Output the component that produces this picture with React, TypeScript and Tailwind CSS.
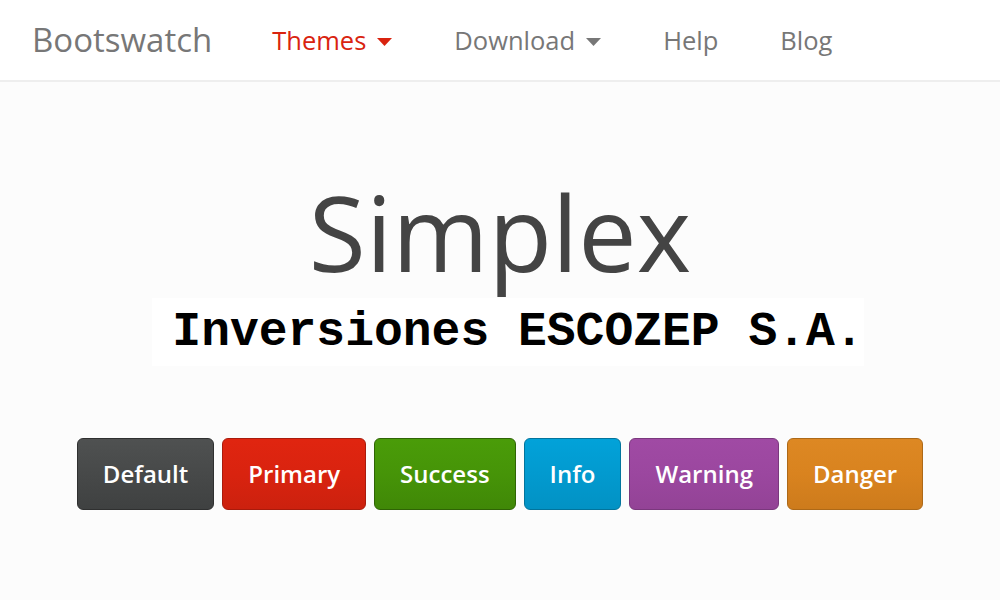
import React from 'react';

const Caret = ({ className }: { className: string }) => (
  <svg width="15" height="8" viewBox="0 0 15 8" className={className}>
    <path d="M0 0 H15 L7.5 8 Z" fill="currentColor" />
  </svg>
);

interface ButtonStyle {
  label: string;
  className: string;
}

const buttons: ButtonStyle[] = [
  { label: 'Default', className: 'from-[#4f5151] via-[#474949] to-[#3f4141] border-[#2f3030]' },
  { label: 'Primary', className: 'from-[#e02510] via-[#d9230f] to-[#cc210e] border-[#a91b0c]' },
  { label: 'Success', className: 'from-[#4a9c09] via-[#469408] to-[#408807] border-[#2f6405]' },
  { label: 'Info', className: 'from-[#02a2d9] via-[#029acf] to-[#0292c4] border-[#02749c]' },
  { label: 'Warning', className: 'from-[#a04aa4] via-[#9b479f] to-[#934396] border-[#7a387d]' },
  { label: 'Danger', className: 'from-[#dd8823] via-[#d9831f] to-[#cd7b1c] border-[#ad6918]' },
];

const App: React.FC = () => {
  return (
    <div className="min-h-screen bg-[#fcfcfc]" style={{ fontFamily: '"Open Sans", sans-serif' }}>
      {/* Navbar */}
      <nav className="h-[82px] bg-white border-b-2 border-[#eeeeee] flex items-center">
        <a className="ml-[32px] pr-[29px] text-[33px] text-[#777777] leading-none -mt-[1px]">Bootswatch</a>
        <ul className="flex items-center text-[25.5px] text-[#777777] leading-none mt-[1px]">
          <li className="px-[31px] flex items-center text-[#d9230f]">
            Themes
            <Caret className="ml-[11px] mt-[3px]" />
          </li>
          <li className="px-[31px] flex items-center">
            Download
            <Caret className="ml-[11px] mt-[3px]" />
          </li>
          <li className="px-[31px]">Help</li>
          <li className="px-[31px]">Blog</li>
        </ul>
      </nav>

      {/* Hero */}
      <section className="flex flex-col items-center">
        <h1 className="mt-[93px] text-[104px] leading-[1.1] text-[#444444]">Simplex</h1>
        <div
          className="mt-[9px] ml-[16px] bg-white pl-[20px] h-[68px] leading-[68px] text-[48px] font-bold text-black"
          style={{ fontFamily: '"Liberation Mono", "Courier New", monospace' }}
        >
          Inversiones ESCOZEP S.A.
        </div>
        <div className="mt-[72px] flex gap-[8px]">
          {buttons.map((b) => (
            <button
              key={b.label}
              className={`h-[72px] px-[25px] rounded-[6px] border bg-gradient-to-b text-white text-[24px] font-semibold ${b.className}`}
            >
              {b.label}
            </button>
          ))}
        </div>
      </section>
    </div>
  );
};

export default App;
